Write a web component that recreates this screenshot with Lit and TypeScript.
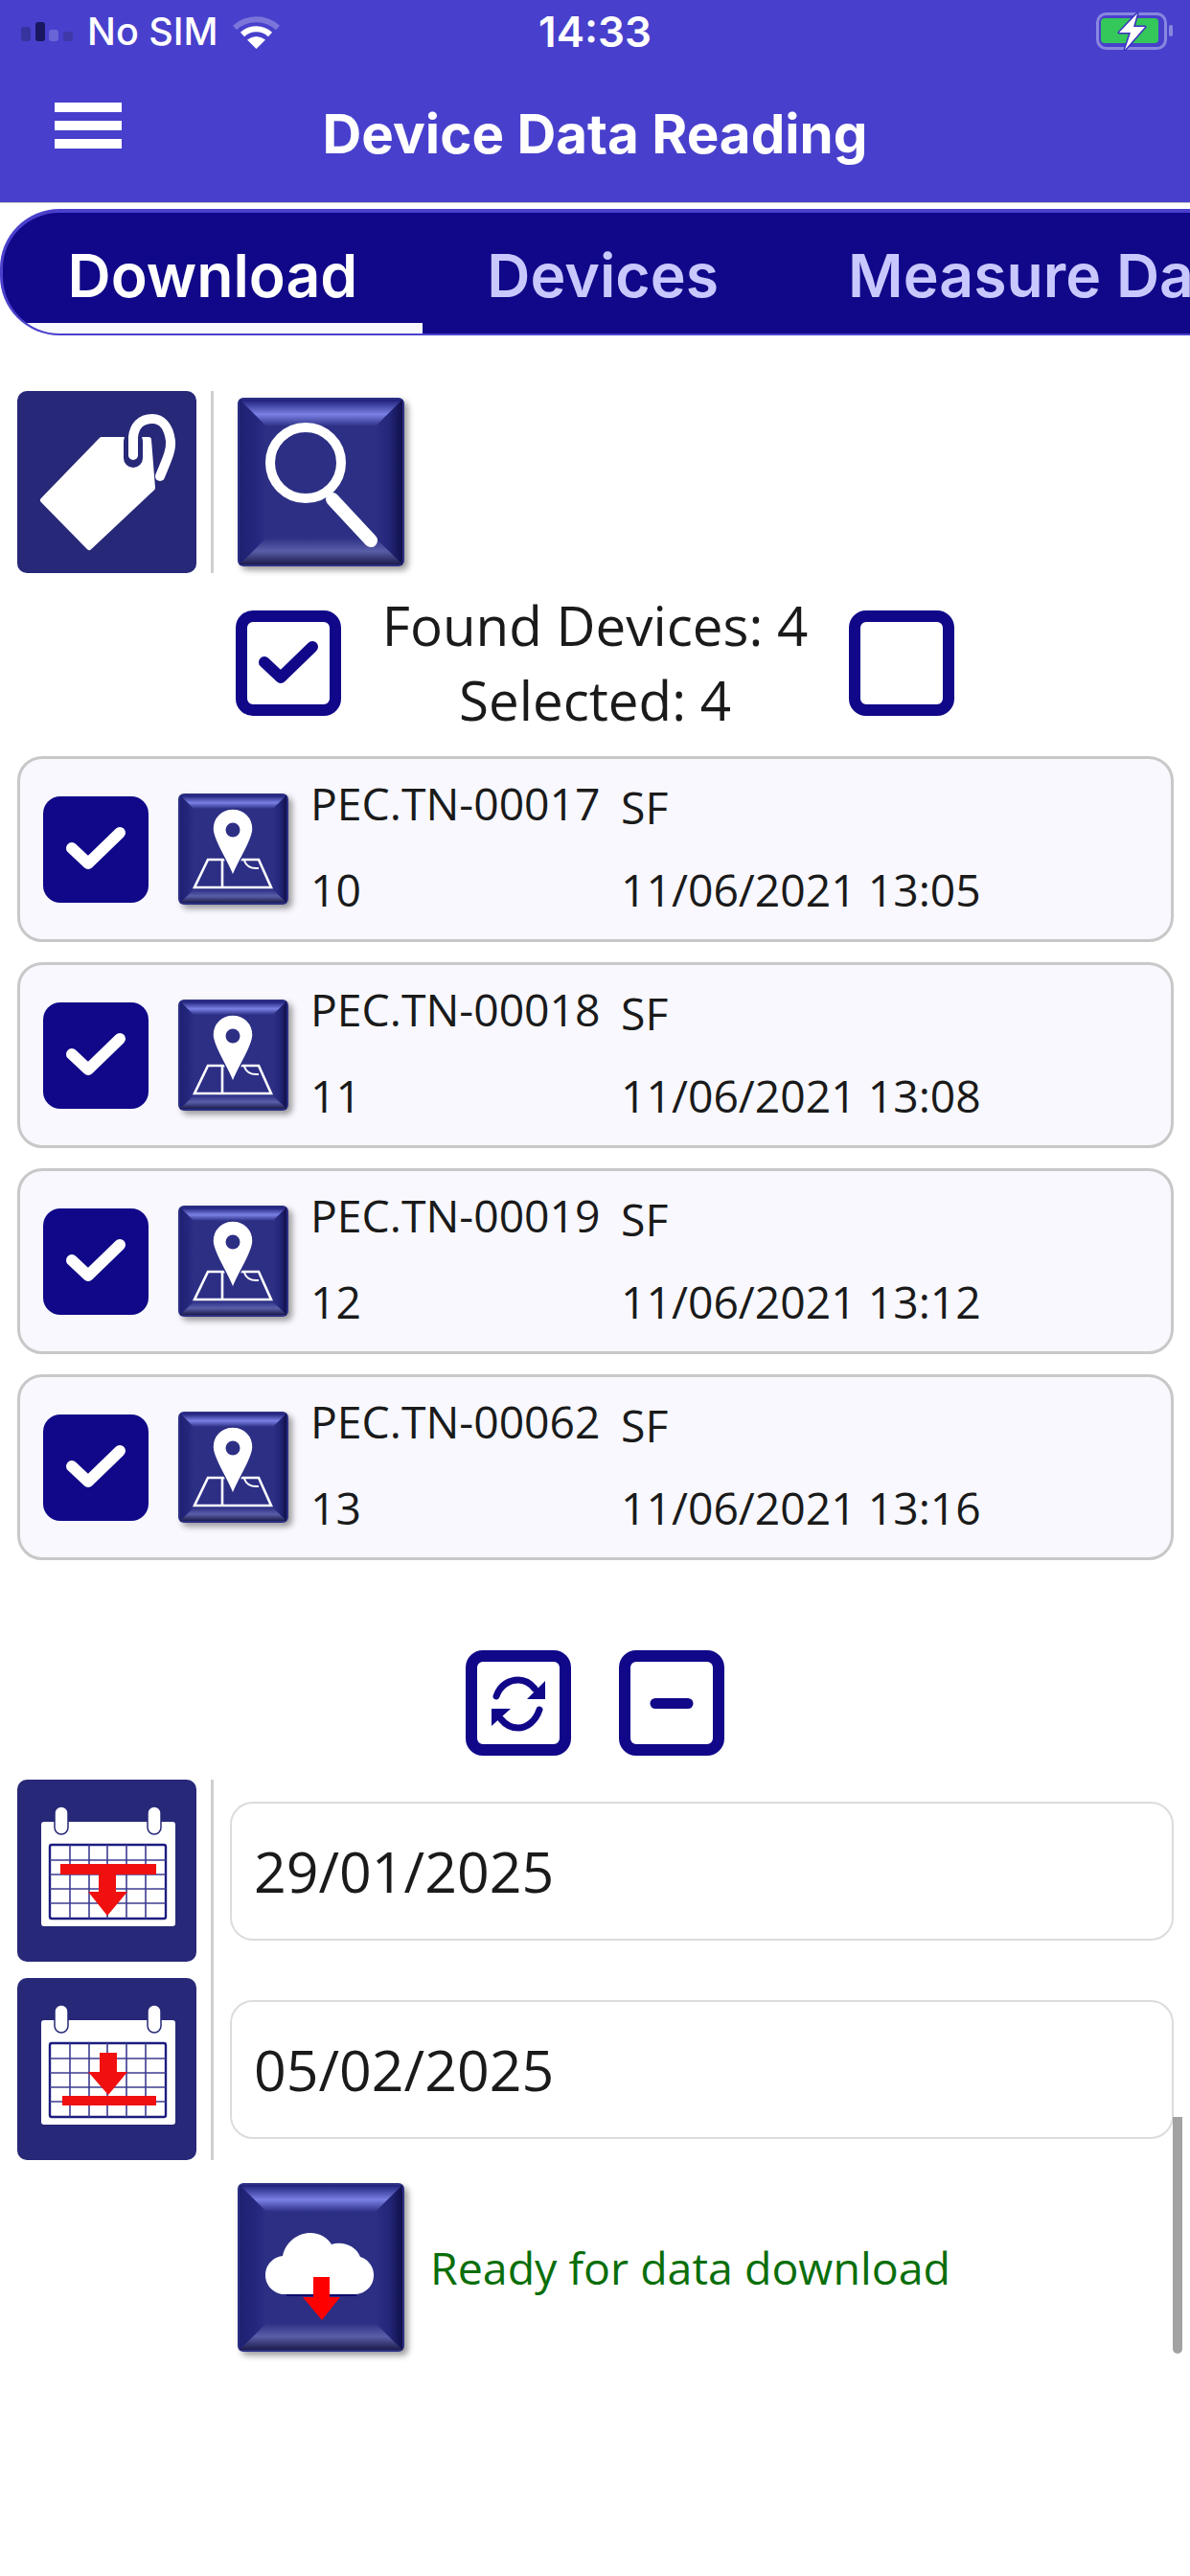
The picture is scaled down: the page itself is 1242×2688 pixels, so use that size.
import { LitElement, html, css, svg } from "lit";
import { customElement } from "lit/decorators.js";

const NAVY = "#100888";

const bevel = (id: string, w: number, h: number, b: number, content: unknown) => html`
  <svg class="bevel" width=${w} height=${h} viewBox="0 0 ${w} ${h}">
    <defs>
      <linearGradient id="${id}t" x1="0" y1="0" x2="0" y2="1">
        <stop offset="0" stop-color="#1d1f78" /><stop offset=".55" stop-color="#7a80e4" /><stop offset="1" stop-color="#2c2f84" />
      </linearGradient>
      <linearGradient id="${id}b" x1="0" y1="0" x2="0" y2="1">
        <stop offset="0" stop-color="#2c2f84" /><stop offset=".5" stop-color="#5a5ea8" /><stop offset="1" stop-color="#1c1c4c" />
      </linearGradient>
      <linearGradient id="${id}l" x1="0" y1="0" x2="1" y2="0">
        <stop offset="0" stop-color="#1e2070" /><stop offset=".6" stop-color="#25277e" /><stop offset="1" stop-color="#2c2f84" />
      </linearGradient>
      <linearGradient id="${id}r" x1="0" y1="0" x2="1" y2="0">
        <stop offset="0" stop-color="#2c2f84" /><stop offset=".5" stop-color="#24267a" /><stop offset="1" stop-color="#10104a" />
      </linearGradient>
    </defs>
    <rect width=${w} height=${h} rx="6" fill="#2c2f84" />
    <polygon points="2,2 ${w - 2},2 ${w - b},${b} ${b},${b}" fill="url(#${id}t)" />
    <polygon points="2,${h - 2} ${b},${h - b} ${w - b},${h - b} ${w - 2},${h - 2}" fill="url(#${id}b)" />
    <polygon points="2,2 ${b},${b} ${b},${h - b} 2,${h - 2}" fill="url(#${id}l)" />
    <polygon points="${w - 2},2 ${w - b},${b} ${w - b},${h - b} ${w - 2},${h - 2}" fill="url(#${id}r)" />
    ${content}
  </svg>
`;

const searchIcon = svg`
  <circle cx="71" cy="68" r="37" fill="none" stroke="#fff" stroke-width="10" />
  <path d="M99 106 L139 149" stroke="#fff" stroke-width="14" stroke-linecap="round" />
`;

const mapIcon = svg`
  <path d="M31 69 H84 L97 98 H17 Z M46 69 V98" fill="none" stroke="#fff" stroke-width="2.6" stroke-linejoin="miter" />
  <path d="M69 70 Q72 79 84 78" fill="none" stroke="#fff" stroke-width="2" />
  <path d="M57 16 C69 16 78 25 78 37 C78 49 65 66 57 86 C49 66 36 49 36 37 C36 25 45 16 57 16 Z" fill="#fff" stroke="#2c2f84" stroke-width="1.5" />
  <circle cx="57" cy="38" r="7.5" fill="#2c2f84" />
`;

const cloudIcon = svg`
  <path d="M51 116 A20 20 0 0 1 47 76 C50 62 62 52 76 52 C86 52 94 57 98 64 C110 60 124 66 128 77 A20 20 0 0 1 124 116 Z" fill="#fff" />
  <path d="M51 117 H124" stroke="#0c0c70" stroke-width="2" />
  <polygon points="79,98 96,98 96,119 107,119 88,143 68,119 79,119" fill="#ff0000" />
`;

const tagIcon = html`
  <svg width="187" height="190" viewBox="0 0 187 190">
    <polygon points="88,51 137,51 141,101 75,163 27,114" fill="#fff" stroke="#fff" stroke-width="6" stroke-linejoin="round" />
    <path d="M121 52 V70" stroke="#272878" stroke-width="20" stroke-linecap="round" />
    <path d="M149 89 C156 72 161 62 160 52 C158 36 150 29 141 29 C128 29 122 38 121 48 V67" fill="none" stroke="#fff" stroke-width="10" stroke-linecap="round" />
  </svg>
`;

const calGrid = svg`
  <rect x="25" y="44" width="140" height="109" fill="#fff" rx="3" />
  <rect x="39" y="28" width="14" height="29" rx="7" fill="#fff" stroke="#272878" stroke-width="1.5" />
  <rect x="136" y="28" width="14" height="29" rx="7" fill="#fff" stroke="#272878" stroke-width="1.5" />
  <rect x="34" y="68" width="121" height="77" rx="2" fill="#fff" stroke="#1c1c80" stroke-width="2.4" />
  <path d="M55 68 V145 M75 68 V145 M94 68 V145 M114 68 V145 M134 68 V145 M34 84 H155 M34 99 H155 M34 114 H155 M34 129 H155" stroke="#3c3c90" stroke-width="1.6" fill="none" />
`;

const calFrom = html`
  <svg width="187" height="190" viewBox="0 0 187 190">
    ${calGrid}
    <rect x="45" y="88" width="100" height="11" fill="#f01010" />
    <polygon points="85,99 103,99 103,117 115,117 94,142 74,117 85,117" fill="#f01010" />
  </svg>
`;

const calTo = html`
  <svg width="187" height="190" viewBox="0 0 187 190">
    ${calGrid}
    <polygon points="86,78 104,78 104,98 115,98 95,122 74,98 86,98" fill="#f01010" />
    <rect x="47" y="123" width="98" height="10" fill="#f01010" />
  </svg>
`;

const box = (content: unknown = "") => html`
  <svg class="box" width="110" height="110" viewBox="0 0 110 110">
    <rect x="6" y="6" width="98" height="98" rx="12" fill="#fff" stroke=${NAVY} stroke-width="12" />
    ${content}
  </svg>
`;

const checkPath = (stroke: string, w = 12) => svg`
  <path d="M30 54 L47 70 L80 38" fill="none" stroke=${stroke} stroke-width=${w} stroke-linecap="round" stroke-linejoin="round" />
`;

const refreshIcon = svg`
  <path d="M32 48 C36 36 46 31 55 31 C62 31 68 35 72 40 M77 62 C73 74 64 81 55 81 C47 81 41 77 37 72" fill="none" stroke=${NAVY} stroke-width="7" stroke-linecap="round" />
  <polygon points="83,32 83,51 64,51" fill=${NAVY} />
  <polygon points="27,61 47,61 27,79" fill=${NAVY} />
`;

const devices = [
  { id: "PEC.TN-00017", n: "10", date: "11/06/2021 13:05" },
  { id: "PEC.TN-00018", n: "11", date: "11/06/2021 13:08" },
  { id: "PEC.TN-00019", n: "12", date: "11/06/2021 13:12" },
  { id: "PEC.TN-00062", n: "13", date: "11/06/2021 13:16" },
];

@customElement("app-root")
export class AppRoot extends LitElement {
  static styles = css`
    :host {
      display: block;
      position: relative;
      width: 1242px;
      height: 2688px;
      overflow: hidden;
      background: #fff;
      color: #1a1a1a;
      font-family: "Open Sans", "Liberation Sans", sans-serif;
    }
    svg { display: block; flex-shrink: 0; }
    .appbar {
      height: 211px;
      background: #4840cc;
      color: #fff;
      font-family: Inter, "Liberation Sans", sans-serif;
      box-shadow: 0 1px 0 #c8c8c8;
    }
    .status {
      display: grid;
      grid-template-columns: 1fr auto 1fr;
      align-items: center;
      height: 66px;
    }
    .status-left { display: flex; align-items: center; padding-left: 22px; }
    .carrier { font-size: 39.5px; font-weight: 500; margin-left: 15px; margin-right: 15px; }
    .time { font-size: 44px; font-weight: 600; }
    .status-right { display: flex; justify-content: flex-end; padding-right: 18px; }
    .titlebar { display: grid; grid-template-columns: 1fr auto 1fr; height: 145px; }
    .burger {
      display: flex;
      flex-direction: column;
      gap: 9px;
      width: 70px;
      margin: 41px 0 0 57px;
    }
    .burger i { display: block; height: 10px; background: #fff; }
    .title { font-size: 56.5px; line-height: 60px; font-weight: 700; padding-top: 44px; }

    .tabs {
      display: flex;
      height: 132px;
      margin-top: 7px;
      box-sizing: border-box;
      background: #100888;
      border: solid #4a40cc;
      border-width: 4px 0 2px 3px;
      border-radius: 62px 0 0 62px;
      overflow: hidden;
      font-family: Inter, "Liberation Sans", sans-serif;
      font-size: 62.5px;
      font-weight: 600;
      color: #c8c8ff;
    }
    .tab {
      display: flex;
      align-items: center;
      flex-shrink: 0;
      padding: 14px 67.5px 0;
      box-sizing: border-box;
      white-space: nowrap;
      border-bottom: 11px solid transparent;
    }
    .tab.on { color: #fff; border-bottom-color: #f8f8ff; }

    .tools { display: flex; align-items: center; height: 190px; margin: 58px 0 0 18px; }
    .flat { width: 187px; height: 190px; border-radius: 10px; background: #272878; flex-shrink: 0; }
    .rule { width: 3px; align-self: stretch; background: #cfcfcf; margin: 0 25px 0 15px; flex-shrink: 0; }
    .bevel { filter: drop-shadow(4px 4px 3px rgba(0, 0, 0, 0.38)); }

    .summary {
      display: flex;
      align-items: center;
      justify-content: center;
      gap: 43px;
      margin-top: 16px;
    }
    .summary-text { font-size: 56.5px; line-height: 78px; text-align: center; white-space: nowrap; }

    .cards { display: flex; flex-direction: column; gap: 21px; margin: 19px 17px 0 18px; }
    .card {
      display: flex;
      align-items: center;
      height: 194px;
      box-sizing: border-box;
      padding-left: 24px;
      background: #f8f8fe;
      border: 3px solid #c8c8c8;
      border-radius: 26px;
    }
    .card .bevel { margin-left: 31px; }
    .info {
      display: grid;
      grid-template-columns: 324px auto;
      grid-template-rows: 90px 90px;
      margin: 0 0 4px 23px;
      font-size: 46.3px;
      line-height: 90px;
      white-space: nowrap;
    }
    .sf { padding-top: 4px; }

    .actions { display: flex; justify-content: center; gap: 50px; margin-top: 94px; }

    .dates {
      display: grid;
      grid-template-columns: 187px 3px 1fr;
      grid-template-rows: 190px 190px;
      column-gap: 15px;
      row-gap: 17px;
      margin: 25px 17px 0 18px;
    }
    .dates .vr { grid-column: 2; grid-row: 1 / 3; background: #cfcfcf; }
    .dates .f1 { grid-column: 3; grid-row: 1; }
    .dates .f2 { grid-column: 3; grid-row: 2; }
    .dates .c1 { grid-column: 1; grid-row: 1; }
    .dates .c2 { grid-column: 1; grid-row: 2; }
    .field {
      display: flex;
      align-items: center;
      align-self: center;
      height: 145px;
      box-sizing: border-box;
      padding-left: 23px;
      margin-left: 2px;
      background: #fff;
      border: 2px solid #dcdcdc;
      border-radius: 24px;
      font-size: 59px;
    }

    .download { display: flex; align-items: center; gap: 27px; margin: 24px 0 0 248px; }
    .ready { font-size: 46.5px; color: #0a6e0a; white-space: nowrap; }

    .scroll {
      position: absolute;
      left: 1224px;
      top: 2209px;
      width: 10px;
      height: 247px;
      background: #a2a2a2;
      border-radius: 0 0 5px 5px;
    }
  `;

  render() {
    return html`
      <div class="appbar">
        <div class="status">
          <div class="status-left">
            <svg width="54" height="20" viewBox="0 0 54 20">
              <rect x="0" y="5" width="10" height="15" rx="3" fill="#39339f" />
              <rect x="15" y="0" width="10" height="20" rx="3" fill="#1a1660" />
              <rect x="29" y="8" width="10" height="12" rx="3" fill="#6a64d6" />
              <rect x="44" y="10" width="10" height="10" rx="3" fill="#3e38a8" />
            </svg>
            <span class="carrier">No SIM</span>
            <svg width="49" height="36" viewBox="0 0 49 36">
              <path d="M2 14 A33 33 0 0 1 47 14" fill="none" stroke="#fff" stroke-opacity=".28" stroke-width="6" />
              <path d="M10 21 A21 21 0 0 1 39 21" fill="none" stroke="#fff" stroke-width="6" />
              <path d="M24.5 36 L15 26.5 Q24.5 19.5 34 26.5 Z" fill="#fff" />
            </svg>
          </div>
          <span class="time">14:33</span>
          <div class="status-right">
            <svg width="80" height="40" viewBox="0 0 80 40">
              <rect x="1.5" y="1.5" width="71" height="36" rx="9" fill="none" stroke="#8a86e0" stroke-width="3" />
              <rect x="5" y="6" width="60" height="26" rx="4" fill="#34c759" />
              <rect x="76" y="13" width="4" height="12" rx="2" fill="#8a86e0" />
              <polygon points="43,1 24,21 36,21 30,39 51,15 39,15" fill="#fff" stroke="#3a30c0" stroke-width="3" paint-order="stroke" stroke-linejoin="round" />
            </svg>
          </div>
        </div>
        <div class="titlebar">
          <div class="burger"><i></i><i></i><i></i></div>
          <div class="title">Device Data Reading</div>
          <div></div>
        </div>
      </div>

      <div class="tabs">
        <div class="tab on">Download</div>
        <div class="tab">Devices</div>
        <div class="tab">Measure Data</div>
      </div>

      <div class="tools">
        <div class="flat">${tagIcon}</div>
        <div class="rule"></div>
        ${bevel("s", 174, 176, 30, searchIcon)}
      </div>

      <div class="summary">
        ${box(checkPath(NAVY))}
        <div class="summary-text">Found Devices: 4<br />Selected: 4</div>
        ${box()}
      </div>

      <div class="cards">
        ${devices.map(
          (d, i) => html`
            <div class="card">
              <svg width="110" height="111" viewBox="0 0 110 111">
                <rect width="110" height="111" rx="18" fill=${NAVY} />
                ${checkPath("#fff")}
              </svg>
              ${bevel("m" + i, 115, 116, 16, mapIcon)}
              <div class="info">
                <span>${d.id}</span><span class="sf">SF</span>
                <span>${d.n}</span><span>${d.date}</span>
              </div>
            </div>
          `
        )}
      </div>

      <div class="actions">
        ${box(refreshIcon)}
        ${box(svg`<path d="M38 55.5 H72" stroke=${NAVY} stroke-width="11" stroke-linecap="round" />`)}
      </div>

      <div class="dates">
        <div class="flat c1">${calFrom}</div>
        <div class="flat c2">${calTo}</div>
        <div class="vr"></div>
        <div class="field f1">29/01/2025</div>
        <div class="field f2">05/02/2025</div>
      </div>

      <div class="download">
        ${bevel("d", 174, 176, 30, cloudIcon)}
        <span class="ready">Ready for data download</span>
      </div>

      <div class="scroll"></div>
    `;
  }
}
